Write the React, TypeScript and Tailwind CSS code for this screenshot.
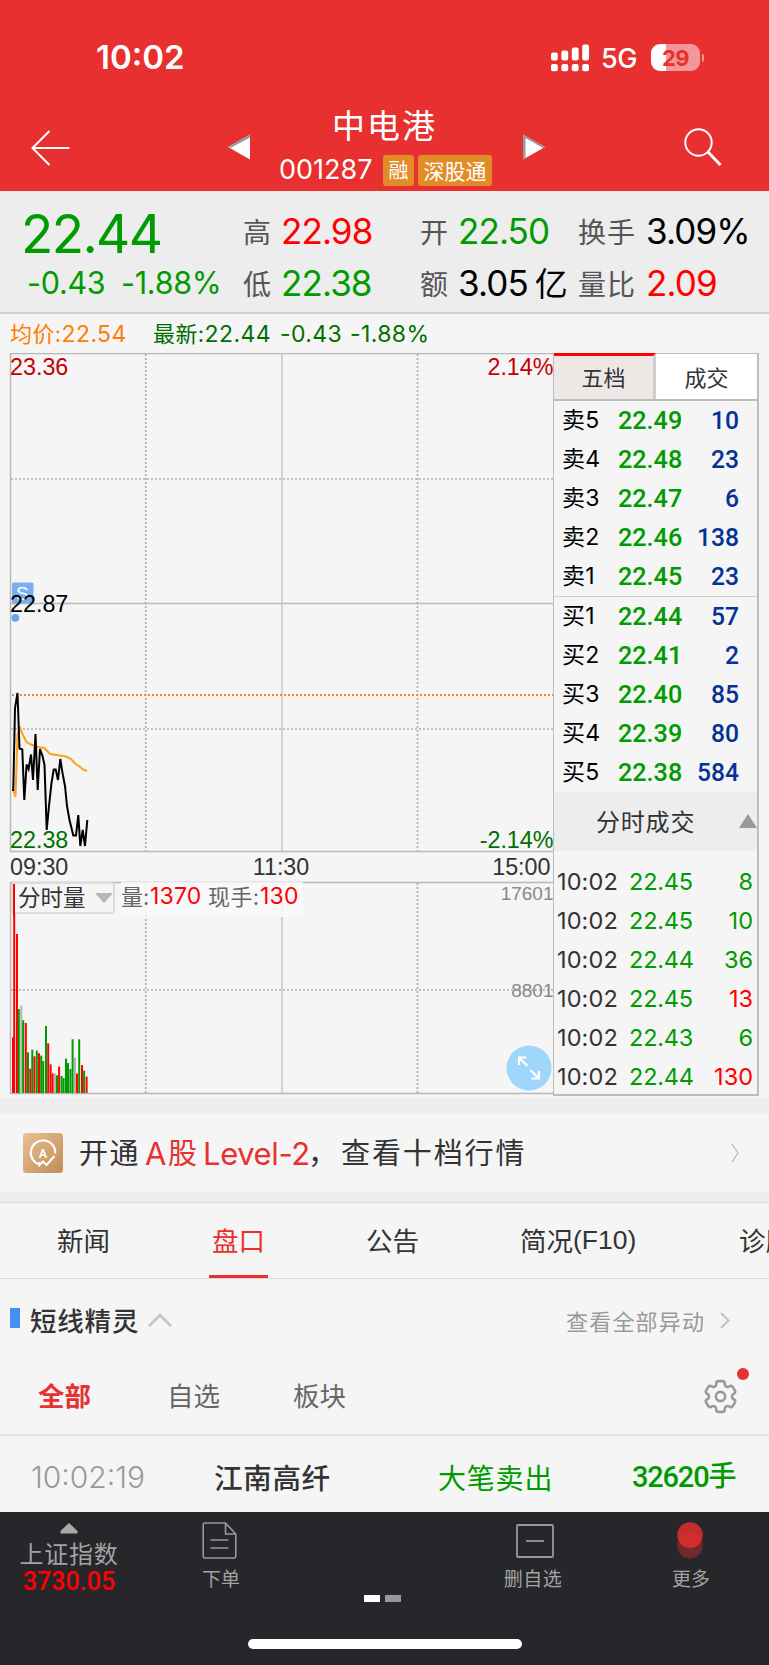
import React from "react";

const CJK = "font-['Noto_Sans_CJK_SC',sans-serif]";
const NUM = "font-['Inter','Noto_Sans_CJK_SC',sans-serif]";
const DIN = "font-['Roboto','Noto_Sans_CJK_SC',sans-serif]";

const GREEN = "#009b00";
const RED = "#ff0000";
const GREY = "#b4b4b4";

const volumeBars: [number, number, string][] = [
  [13, 1037.5, RED], [14.2, 883.5, RED], [17, 934, RED], [18.8, 1009, GREEN],
  [21.3, 1005.5, GREY], [23.2, 1020.3, GREEN], [25.8, 1023, RED], [28, 1052.3, GREEN],
  [30.3, 1068.6, RED], [32.3, 1049.6, GREEN], [34.4, 1056.3, RED], [36.8, 1050.6, GREEN],
  [39, 1053.3, RED], [41.2, 1055.6, GREEN], [43.2, 1061, GREEN], [46, 1026, GREEN],
  [48.2, 1043.3, RED], [50.6, 1064.3, RED], [52.6, 1073.3, RED], [55, 1073.6, GREY],
  [57, 1075.3, GREEN], [59.1, 1066.6, RED], [61.6, 1076, GREEN], [63.6, 1078, GREEN],
  [66, 1058.6, GREEN], [68, 1063, GREEN], [70.4, 1069, GREEN], [72.6, 1039.3, GREEN],
  [75, 1057.6, GREY], [77, 1073.6, RED], [79.2, 1039.3, GREEN], [82, 1065, RED],
  [84.1, 1070.6, GREEN], [86.6, 1076.6, RED],
];

const book: [string, string, string][] = [
  ["卖5", "22.49", "10"], ["卖4", "22.48", "23"], ["卖3", "22.47", "6"],
  ["卖2", "22.46", "138"], ["卖1", "22.45", "23"], ["买1", "22.44", "57"],
  ["买2", "22.41", "2"], ["买3", "22.40", "85"], ["买4", "22.39", "80"],
  ["买5", "22.38", "584"],
];

const trades: [string, string, boolean][] = [
  ["22.45", "8", false], ["22.45", "10", false], ["22.44", "36", false],
  ["22.45", "13", true], ["22.43", "6", false], ["22.44", "130", true],
];

function StatusBar() {
  return (
    <div className="flex h-[115px] items-center text-white">
      <div className={`${NUM} ml-[96px] w-[455px] text-[33px] font-semibold leading-none tracking-[0px]`}>10:02</div>
      <svg width="38" height="28" viewBox="0 0 38 28" fill="#fff">
        {[[0, 8], [10.4, 6], [20.8, 3], [31.2, 0]].map(([x, y]) => (
          <g key={x}>
            <rect x={x} y={y + 0.5} width="6.8" height={16 - y} rx="2" />
            <rect x={x} y="20" width="6.8" height="7.2" rx="2" />
          </g>
        ))}
      </svg>
      <div className={`${NUM} ml-[12px] w-[50px] pt-[1px] text-[27px] font-medium leading-none tracking-[-0.4px]`}>5G</div>
      <div className="flex h-[27px] w-[49px] items-center justify-center overflow-hidden rounded-[9px] bg-[linear-gradient(90deg,#fff_15px,#f49798_15px)]">
        <span className={`${NUM} text-[22px] font-bold leading-none tracking-[-0.5px] text-[#e83030]`}>29</span>
      </div>
      <div className="ml-[2px] h-[8px] w-[2px] rounded-r-full bg-[#f49798]" />
    </div>
  );
}

function Header() {
  return (
    <header className="h-[191px] bg-[#e83030]">
      <StatusBar />
      <div className="flex h-[76px] text-white">
        <svg className="ml-[30px] mt-[14px]" width="42" height="38" viewBox="0 0 42 38" fill="none" stroke="#fff" strokeWidth="2">
          <path d="M39.500 19H2.500M19.500 2L2.500 19L19.500 36" />
        </svg>
        <svg className="ml-[155px] mt-[18px]" width="24" height="28" viewBox="0 0 24 28">
          <path d="M1 14L23 1.500V26.500Z" fill="#fff" />
          <path d="M1 14L23 1.500V4.500L4 14.800Z" fill="#777" opacity=".75" />
        </svg>
        <div className="ml-[28px] w-[213px]">
          <div className={`${CJK} -mt-[11px] flex h-[40px] items-center pl-[53px] text-[33px] font-normal leading-none tracking-[2px]`}>中电港</div>
          <div className="mt-[10px] flex h-[33px] items-center">
            <span className={`${NUM} w-[104px] pb-[2px] text-[27px] font-normal leading-none tracking-[0px]`}>001287</span>
            <span className={`${CJK} flex h-[31px] w-[31px] items-center justify-center rounded-[3px] bg-[#e28c27] pb-[1px] text-[20px] leading-none`}>融</span>
            <span className={`${CJK} ml-[4px] flex h-[31px] w-[74px] items-center justify-center rounded-[3px] bg-[#e28c27] pb-[1px] text-[21px] leading-none`}>深股通</span>
          </div>
        </div>
        <svg className="ml-[30px] mt-[18px]" width="24" height="28" viewBox="0 0 24 28">
          <path d="M1 1.500L23 14L1 26.500Z" fill="#fff" />
          <path d="M1 1.500L23 14L21 15L3.500 5V25L1 26.500Z" fill="#777" opacity=".75" />
        </svg>
        <svg className="ml-[136px] mt-[12px]" width="42" height="42" viewBox="0 0 42 42" fill="none" stroke="#fff">
          <circle cx="16.500" cy="15.500" r="13.200" strokeWidth="2" />
          <path d="M26 25L38.500 38" strokeWidth="3" />
        </svg>
      </div>
    </header>
  );
}

function Field({ label, value, labelClass, valueClass }: { label: string; value: React.ReactNode; labelClass: string; valueClass: string }) {
  return (
    <>
      <span className={`${CJK} pb-[1px] text-[28px] font-normal text-[#555] ${labelClass}`}>{label}</span>
      <span className={`${NUM} text-[35px] tracking-[-0.9px] ${valueClass}`}>{value}</span>
    </>
  );
}

function Quote() {
  return (
    <section className="flex h-[123px] whitespace-nowrap border-b-2 border-[#cfcfcf] bg-[#ededed] leading-none">
      <div className="w-[243px] text-[#009b00]">
        <div className={`${NUM} flex h-[65px] items-center pl-[21px] pt-[22px] text-[53px] tracking-[-1.6px]`}>22.44</div>
        <div className={`${NUM} flex h-[55px] items-center pl-[27px] text-[30.500px] tracking-[-0.3px]`}>
          <span className="w-[94px]">-0.43</span>
          <span>-1.88%</span>
        </div>
      </div>
      <div className="flex flex-col pt-[14px]">
        <div className="flex h-[52px] items-center">
          <Field label="高" value="22.98" labelClass="w-[38px]" valueClass="w-[139px] text-[#ff0000]" />
          <Field label="开" value="22.50" labelClass="w-[38px]" valueClass="w-[120px] text-[#009b00]" />
          <Field label="换手" value="3.09%" labelClass="w-[68px] tracking-[1px]" valueClass="text-black" />
        </div>
        <div className="flex h-[53px] items-center">
          <Field label="低" value="22.38" labelClass="w-[38px]" valueClass="w-[139px] text-[#009b00]" />
          <Field label="额" value={<>3.05<span className="ml-[7px] text-[33px]">亿</span></>} labelClass="w-[38px]" valueClass="w-[120px] text-black" />
          <Field label="量比" value="2.09" labelClass="w-[68px] tracking-[1px]" valueClass="text-[#ff0000]" />
        </div>
      </div>
    </section>
  );
}

function PriceChart() {
  return (
    <div className="relative h-[745px] w-[553px]">
      <svg className="font-['Liberation_Sans',sans-serif]" width="553" height="745" viewBox="0 353 553 745" fontSize="23.300">
        <g stroke="#b9b9b9" strokeWidth="1.500" fill="none">
          <path d="M10.500 353.500H554M10.500 353V852M10.500 851.500H554M10.500 603.500H554M10.500 882.500H554M10.500 882V1093.500H554" />
          <path d="M282 353V851M282 883V1093" strokeWidth="1.500" stroke="#c6c6c6" />
          <g strokeDasharray="2 2" stroke="#b0b0b0" strokeWidth="1.700">
            <path d="M145.700 354V851M417.500 354V851M11 479H554M11 729H554M145.700 883V1093M417.500 883V1093M11 990H554" />
          </g>
        </g>
        <path d="M12 695H554" stroke="#ff8522" strokeWidth="2" strokeDasharray="2 2" />
        <g>
          <rect x="12" y="582.500" width="21.500" height="21" rx="1.500" fill="#79aef1" />
          <text x="16" y="600" fill="#fff" fontSize="19">S</text>
          <circle cx="15.300" cy="617.800" r="3.900" fill="#65a3ee" />
        </g>
        <polyline fill="none" stroke="#ffa01e" strokeWidth="2" points="13.500,791 15.500,797 17.500,735 20.200,728 22,733 26.500,742 31,744.500 38,747 44.500,748 50,754 60,755.500 66,756.500 71,759 75,763.500 79,766 83,769.500 87,771" />
        <polyline fill="none" stroke="#000" strokeWidth="2" points="12,790 13.300,790 15,708 17.500,693 19.500,748.500 22.300,749.500 24.300,800 26.600,764.500 28.600,769 31,754.500 33,780 35.500,734 37.700,790 40,749 42.500,756 44.500,765 46.700,830 49,806 51.500,783 53.700,769.500 55.700,769.500 58,780 60.300,759 62.500,773 65,786 67,806 69.500,820 73.300,835.500 76,835.500 78.300,815 80.300,846 82.700,830 85,846 87.300,820" />
        <text x="10" y="375" fill="#c40000">23.36</text>
        <text x="553.500" y="375" fill="#c40000" textAnchor="end">2.14%</text>
        <text x="10" y="611.500" fill="#000">22.87</text>
        <text x="10" y="847.500" fill="#006f00">22.38</text>
        <text x="553.500" y="847.500" fill="#006f00" textAnchor="end">-2.14%</text>
        <g fill="#333">
          <text x="10" y="874.500">09:30</text>
          <text x="281" y="874.500" textAnchor="middle">11:30</text>
          <text x="550.500" y="874.500" textAnchor="end">15:00</text>
        </g>
        <g fill="#888" fontSize="19">
          <text x="553.500" y="900" textAnchor="end">17601</text>
          <text x="553.500" y="997" textAnchor="end">8801</text>
        </g>
        {volumeBars.map(([x, y, color]) => (
          <rect key={x} x={x - 1} y={y} width="2" height={1093 - y} fill={color} />
        ))}
      </svg>
      <div className={`${CJK} absolute left-[11px] top-[529px] flex h-[32px] w-[104px] items-center whitespace-nowrap rounded-[3px] border-2 border-[#dcdcdc] bg-[#f5f5f5] pb-[3px] pl-[5px] text-[22.500px] leading-none text-[#333]`}>
        分时量
        <svg className="ml-[9px] mt-[2px]" width="18" height="12" viewBox="0 0 18 12"><path d="M0 1H18L9 11Z" fill="#b8b8b8" /></svg>
      </div>
      <svg className="absolute left-[12px] top-[530px]" width="4" height="33"><rect x="1" y="1" width="2" height="32" fill="#ff0000" /></svg>
      <div className={`${NUM} absolute left-[121px] top-[529px] flex h-[35px] w-[182px] items-center whitespace-nowrap bg-[#f9f9f9]/85 pb-[6px] text-[22px] leading-none text-[#666]`}>
        <span className="w-[29px]">量:</span>
        <span className="w-[58px] text-[23px] tracking-[0.200px] text-[#ff0000]">1370</span>
        <span className="w-[52px] tracking-[0.400px]">现手:</span>
        <span className="text-[23px] tracking-[0.200px] text-[#ff0000]">130</span>
      </div>
      <svg className="absolute left-[506px] top-[692px]" width="46" height="46" viewBox="0 0 46 46">
        <circle cx="23" cy="23" r="22.500" fill="#9fd6fc" />
        <path d="M21.500 21L13 12.500M20.500 12.500H13V20M24.500 25L33 33.500M25.500 33.500H33V26" fill="none" stroke="#fff" strokeWidth="2.200" />
      </svg>
    </div>
  );
}

function OrderBook() {
  return (
    <aside className="h-[743px] w-[206px] border-b-2 border-l-[1.500px] border-r-2 border-[#bdbdbd] leading-none">
      <div className={`${CJK} flex h-[48px] border-b-2 border-[#bdbdbd] text-[22px] text-[#333]`}>
        <div className="flex w-[102px] items-center justify-center border-r-[3px] border-t-[3px] border-r-[#cfcfcf] border-t-[#ff0000] bg-[#ede8e5] pb-[4px]">五档</div>
        <div className="flex flex-1 items-center justify-center border-t border-[#bdbdbd] bg-white pb-[2px]">成交</div>
      </div>
      <div className="flex h-[391px] flex-col">
        {book.map(([label, price, qty], i) => (
          <div key={label} className={i === 5 ? "flex flex-1 items-center border-t border-[#ccc] pb-[1px] pl-[8px] pr-[18px]" : "flex flex-1 items-center pb-[1px] pl-[8px] pr-[18px]"}>
            <span className="w-[56px] whitespace-nowrap font-['Inter','Noto_Sans_CJK_SC',sans-serif] text-[23px] tracking-[0.300px] text-black">{label}</span>
            <span className={`${DIN} w-[68px] origin-left scale-x-[0.95] text-[26.500px] font-medium text-[#009b00]`}>{price}</span>
            <span className={`${DIN} flex-1 origin-right scale-x-[0.93] text-right text-[26.500px] font-medium text-[#053296]`}>{qty}</span>
          </div>
        ))}
      </div>
      <div className={`${CJK} flex h-[59px] items-center bg-[#ededed] pb-[1px] pl-[42px] text-[24px] font-normal tracking-[0.8px] text-[#333]`}>
        <span className="w-[143px]">分时成交</span>
        <svg className="-mr-[2px]" width="18" height="14" viewBox="0 0 18 14"><path d="M9 0L18 14H0Z" fill="#999" /></svg>
      </div>
      <div className={`${NUM} mt-[11px] flex h-[232px] flex-col text-[23.500px]`}>
        {trades.map(([price, qty, up], i) => (
          <div key={i} className="flex h-[39.100px] shrink-0 items-center pl-[3px] pr-[4px]">
            <span className="w-[72px] tracking-[0.100px] text-[#333]">10:02</span>
            <span className="tracking-[-0.200px] text-[#009b00]">{price}</span>
            <span className={up ? "flex-1 text-right text-[#ff0000]" : "flex-1 text-right text-[#009b00]"}>{qty}</span>
          </div>
        ))}
      </div>
    </aside>
  );
}

function LevelTwo() {
  return (
    <section className="flex h-[104px] items-center border-b-[10px] border-t-[16px] border-[#ededed] pl-[23px] leading-none">
      <svg width="40" height="40" viewBox="0 0 40 40">
        <defs>
          <linearGradient id="gold" x1="0" y1="0" x2="1" y2="1">
            <stop offset="0" stopColor="#e8bf94" />
            <stop offset="1" stopColor="#c28d57" />
          </linearGradient>
        </defs>
        <rect width="40" height="40" rx="3.500" fill="url(#gold)" />
        <path d="M16.500 31.500A12.300 12.300 0 1 1 32.300 20.500M16.500 29V32L20 28.500L23.500 32L31.500 23" fill="none" stroke="#fff" strokeWidth="2" />
        <text x="20" y="24.500" textAnchor="middle" fontSize="12.500" fontWeight="700" fill="#fff" className="font-['Roboto',sans-serif]">A</text>
      </svg>
      <div className={`${NUM} ml-[16px] flex w-[652px] items-center whitespace-nowrap text-[29px] font-normal text-[#333]`}>
        <span className="w-[66px] tracking-[1.500px]">开通</span>
        <span className="w-[23px] text-[31px] text-[#e83030]">A</span>
        <span className="w-[35px] text-[#e83030]">股</span>
        <span className="w-[105px] text-[31px] tracking-[-0.400px] text-[#e83030]">Level-2</span>
        <span className="w-[33px]">，</span>
        <span className="tracking-[1.900px]">查看十档行情</span>
      </div>
      <svg width="8" height="20" viewBox="0 0 8 20" fill="none" stroke="#bbb" strokeWidth="1.300"><path d="M1 1L7 10L1 19" /></svg>
    </section>
  );
}

function Tabs() {
  return (
    <nav className={`${CJK} flex h-[77px] items-stretch overflow-hidden whitespace-nowrap border-b border-t border-[#dadada] pb-0 pl-[57px] text-[26.500px] font-normal leading-none text-[#333]`}>
      <span className="flex w-[152px] shrink-0 items-center">新闻</span>
      <span className="-mb-px flex w-[59px] shrink-0 items-center justify-center border-b-4 border-[#e83030] pt-[3px] text-[#e83030]">盘口</span>
      <span className="flex w-[252px] shrink-0 items-center pl-[98px]">公告</span>
      <span className="flex w-[219px] shrink-0 items-center">简况<span className="font-['Liberation_Sans',sans-serif]">(F10)</span></span>
      <span className="flex shrink-0 items-center">诊股</span>
    </nav>
  );
}

function Alerts() {
  return (
    <section className={`${CJK} h-[233px] whitespace-nowrap leading-none`}>
      <div className="flex h-[87px] items-center pb-[5px]">
        <div className="mb-[4px] ml-[10px] h-[20px] w-[10px] bg-[#448ff0]" />
        <span className="ml-[10px] w-[118px] text-[26.500px] font-medium tracking-[0.800px] text-[#333]">短线精灵</span>
        <svg className="mb-[1px]" width="24" height="16" viewBox="0 0 24 16" fill="none" stroke="#c8c8c8" strokeWidth="3"><path d="M1 14L12 3L23 14" /></svg>
        <span className="ml-[394px] w-[154px] text-[22px] font-normal tracking-[1.200px] text-[#999]">查看全部异动</span>
        <svg width="10" height="17" viewBox="0 0 10 17" fill="none" stroke="#c0c0c0" strokeWidth="2"><path d="M1 1L8.500 8.500L1 16" /></svg>
      </div>
      <div className="flex h-[70px] items-center border-b-2 border-[#e3e3e3] pb-[9px] pl-[38px] text-[26.500px] font-normal text-[#666]">
        <span className="w-[129px] font-bold text-[#e83030]">全部</span>
        <span className="w-[126px]">自选</span>
        <span className="w-[407px]">板块</span>
        <div className="relative mb-[-1px]">
          <svg width="41" height="41" viewBox="0 0 24 24" fill="none" stroke="#999" strokeWidth="1.500">
            <path d="M9.594 3.940c.09-.542.560-.940 1.110-.940h2.593c.550 0 1.020.398 1.110.940l.213 1.281c.063.374.313.686.645.870.074.040.147.083.220.127.325.196.720.257 1.075.124l1.217-.456a1.125 1.125 0 0 1 1.370.490l1.296 2.247a1.125 1.125 0 0 1-.260 1.431l-1.003.827c-.293.241-.438.613-.430.992v.255c-.008.378.137.750.430.991l1.004.827c.424.350.534.955.260 1.430l-1.298 2.247a1.125 1.125 0 0 1-1.369.491l-1.217-.456c-.355-.133-.750-.072-1.076.124-.072.044-.146.086-.220.128-.331.183-.581.495-.644.869l-.213 1.281c-.090.543-.560.940-1.110.940h-2.594c-.550 0-1.019-.398-1.110-.940l-.213-1.281c-.062-.374-.312-.686-.644-.870-.074-.040-.147-.083-.220-.127-.325-.196-.720-.257-1.076-.124l-1.217.456a1.125 1.125 0 0 1-1.369-.490l-1.297-2.247a1.125 1.125 0 0 1 .260-1.431l1.004-.827c.292-.240.437-.613.430-.991v-.255c.007-.380-.138-.751-.430-.992l-1.004-.827a1.125 1.125 0 0 1-.260-1.430l1.297-2.247a1.125 1.125 0 0 1 1.370-.491l1.216.456c.356.133.751.072 1.076-.124.072-.044.146-.086.220-.128.332-.183.582-.495.644-.869l.214-1.280Z" />
            <circle cx="12" cy="12" r="2.700" />
          </svg>
          <div className="absolute -top-[8px] left-[37px] h-[12px] w-[12px] rounded-full bg-[#e83030]" />
        </div>
      </div>
      <div className="flex h-[76px] items-center pb-[2px] pt-[8px]">
        <span className={`${NUM} ml-[31px] w-[183px] text-[30px] font-light tracking-[0px] text-[#999]`}>10:02:19</span>
        <span className="w-[224px] text-[28.500px] font-medium tracking-[0.700px] text-[#333]">江南高纤</span>
        <span className="w-[194px] text-[28px] tracking-[0.800px] text-[#009b00]">大笔卖出</span>
        <span className={`${DIN} flex items-center text-[29px] font-medium tracking-[-1.200px] text-[#009b00]`}>32620<span className="text-[28px] tracking-normal">手</span></span>
      </div>
    </section>
  );
}

function BottomBar() {
  return (
    <footer className={`${CJK} h-[153px] whitespace-nowrap bg-[#27262a] leading-none text-[#a3a3a3]`}>
      <div className="flex h-[83px] text-[19px] font-normal">
        <div className="flex w-[138px] flex-col items-center pt-[11px]">
          <svg width="18" height="11" viewBox="0 0 18 11"><path d="M9 0L17.500 8V10.500H.500V8Z" fill="#aaa" /></svg>
          <span className="mt-[6px] text-[24px] leading-[26px] tracking-[0.700px]">上证指数</span>
          <span className={`${DIN} mt-[3px] text-[25px] font-medium leading-[25px] tracking-[0px] text-[#ff0000]`}>3730.05</span>
        </div>
        <div className="ml-[64px] flex w-[38px] flex-col items-center pt-[10px]">
          <svg className="mr-[3px]" width="35" height="37" viewBox="0 0 35 37" fill="none" stroke="#999" strokeWidth="1.600"><path d="M23.500 1H3Q1.200 1 1.200 3V34Q1.200 36 3 36H32Q33.800 36 33.800 34V12ZM23.500 1V12H33.800M8.500 18H26.500M8.500 26H26.500" /></svg>
          <span className="mt-[9px]">下单</span>
        </div>
        <div className="ml-[262px] flex w-[62px] flex-col items-center pt-[12px]">
          <svg className="ml-[4px]" width="38" height="34" viewBox="0 0 38 34" fill="none" stroke="#999" strokeWidth="1.800"><rect x="1" y="1" width="36" height="32" rx="1" /><path d="M10 17H28" /></svg>
          <span className="mt-[10px] tracking-[0.500px]">删自选</span>
        </div>
        <div className="ml-[106px] flex w-[42px] flex-col items-center pt-[10px]">
          <svg className="mr-[3px]" width="26" height="37" viewBox="0 0 26 37"><circle cx="13" cy="23.800" r="12.800" fill="#702a2d" /><circle cx="13" cy="13" r="12.800" fill="#c52c2e" /><path d="M1.400 18.400A12.800 12.800 0 0 1 24.600 18.400A12.800 12.800 0 0 1 1.400 18.400Z" fill="#d22e2f" /></svg>
          <span className="mt-[9px]">更多</span>
        </div>
      </div>
      <div className="flex justify-center gap-[5px] pr-[4px]">
        <div className="h-[7px] w-[16px] bg-white" />
        <div className="h-[7px] w-[16px] bg-[#98989a]" />
      </div>
      <div className="mx-auto mt-[37px] h-[10px] w-[274px] rounded-full bg-white" />
    </footer>
  );
}

export default function App() {
  return (
    <main className="h-[1665px] w-[769px] overflow-hidden bg-[#f5f5f5]">
      <div className="h-[1664px] bg-[#f5f5f5]">
        <Header />
        <Quote />
        <div className={`${NUM} flex h-[39px] items-center whitespace-nowrap pl-[10px] pt-[1px] text-[23px] leading-none tracking-[0.400px] text-[#006f00]`}>
          <span className="w-[143px] text-[#ff7d00]"><span className="text-[22px]">均价:</span>22.54</span>
          <span className="w-[127px]"><span className="text-[22px]">最新:</span>22.44</span>
          <span className="w-[70px]">-0.43</span>
          <span>-1.88%</span>
        </div>
        <div className="flex h-[745px]">
          <PriceChart />
          <OrderBook />
        </div>
        <LevelTwo />
        <Tabs />
        <Alerts />
        <BottomBar />
      </div>
    </main>
  );
}
